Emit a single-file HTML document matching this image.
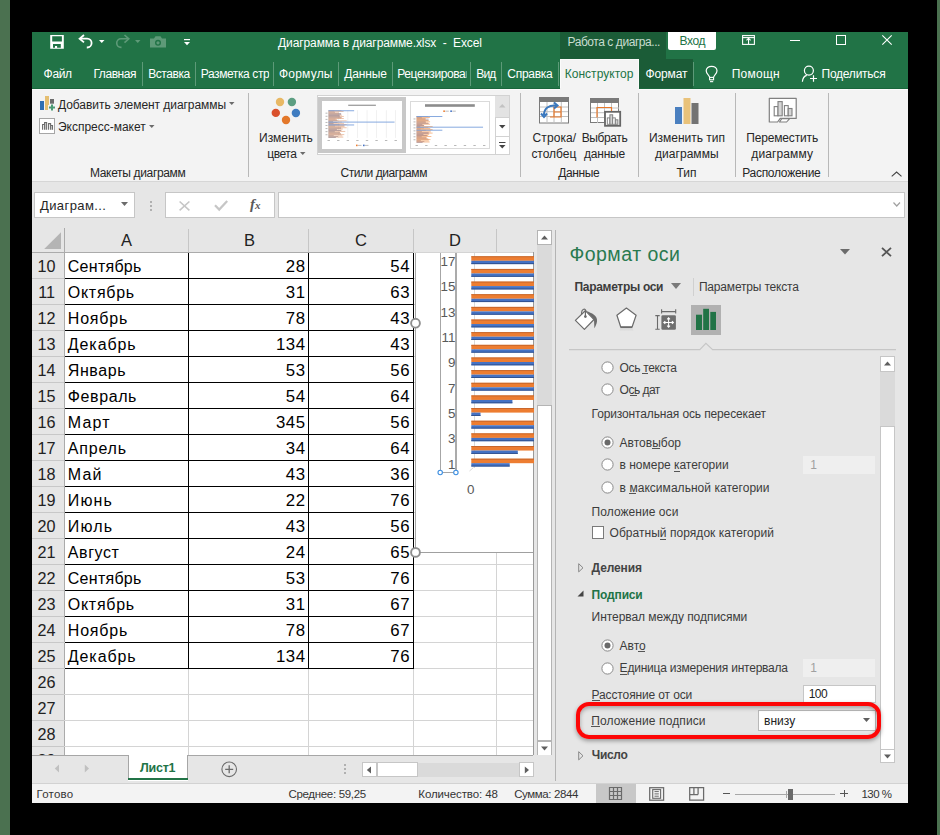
<!DOCTYPE html>
<html><head><meta charset="utf-8"><style>
html,body{margin:0;padding:0;}
body{width:940px;height:835px;background:#000;position:relative;overflow:hidden;font-family:'Liberation Sans', sans-serif;}
.a{position:absolute;display:block;}
.t{white-space:nowrap;}
svg.a{overflow:visible;}
</style></head><body>
<div class="a" style="left:0px;top:0px;width:10px;height:835px;background:#4b7150;"></div>
<div class="a" style="left:937px;top:0px;width:3px;height:835px;background:#4b7150;"></div>
<div class="a" style="left:32px;top:32px;width:876px;height:56px;background:#217346;"></div>
<div class="a" style="left:560px;top:32px;width:106px;height:27px;background:#1b5c37;"></div>
<span class="a t" id="t0" style="left:567.50px;top:35.84px;font-size:12px;line-height:12px;color:#c8dccf;font-weight:400;font-family:'Liberation Sans', sans-serif;letter-spacing:-0.438px;">Работа с диагра...</span>
<div class="a" style="left:668px;top:32px;width:48px;height:17.5px;background:#ffffff;border-radius:0 0 2px 2px;"></div>
<span class="a t" id="t1" style="left:679.50px;top:35.14px;font-size:12px;line-height:12px;color:#217346;font-weight:400;font-family:'Liberation Sans', sans-serif;letter-spacing:-0.414px;">Вход</span>
<span class="a t" id="t2" style="left:278.00px;top:36.84px;font-size:12px;line-height:12px;color:#ffffff;font-weight:400;font-family:'Liberation Sans', sans-serif;letter-spacing:-0.097px;">Диаграмма в диаграмме.xlsx&nbsp;&nbsp;-&nbsp;&nbsp;Excel</span>
<svg class="a" style="left:50px;top:35px;" width="14" height="14" viewBox="0 0 14 14"><path fill="#fff" fill-rule="evenodd" d="M0.2 0 H13.8 V13.7 H0.2 Z M2.2 1.2 H11.9 V6.6 H2.2 Z M3 9 H10.8 V12.7 H7.1 V11 H5 V12.7 H3 Z"/></svg>
<svg class="a" style="left:78px;top:34px;" width="16" height="15" viewBox="0 0 16 15"><path d="M2 4.7 H9.2 A4.4 4.4 0 0 1 9.2 13.5 H8.8" fill="none" stroke="#fff" stroke-width="1.8"/><path d="M6 1 L1.6 4.7 L6 8.4" fill="none" stroke="#fff" stroke-width="1.8"/></svg>
<svg class="a" style="left:98.5px;top:40px;" width="6" height="3.5" viewBox="0 0 6 3.5"><path d="M0 0 H5.5 L2.75 3 Z" fill="#fff"/></svg>
<svg class="a" style="left:113.5px;top:34px;" width="16" height="15" viewBox="0 0 16 15"><path d="M14.5 4.8 H7 A4.3 4.3 0 0 0 7 13.4 H7.5" fill="none" stroke="#5e9a78" stroke-width="1.6"/><path d="M10.5 1 L14.8 4.8 L10.5 8.6" fill="none" stroke="#5e9a78" stroke-width="1.6"/></svg>
<svg class="a" style="left:134.5px;top:40px;" width="6" height="3.5" viewBox="0 0 6 3.5"><path d="M0 0 H5.5 L2.75 3 Z" fill="#5e9a78"/></svg>
<svg class="a" style="left:150px;top:36px;" width="16" height="12" viewBox="0 0 16 12"><path d="M0 2.5 H4 L5.5 0.3 H10.5 L12 2.5 H16 V11.5 H0 Z" fill="#5e9a78"/><circle cx="8" cy="6.8" r="3" fill="#217346"/><circle cx="8" cy="6.8" r="1.6" fill="#5e9a78"/></svg>
<svg class="a" style="left:183.5px;top:38.5px;" width="6" height="7" viewBox="0 0 6 7"><rect x="0" y="0" width="6" height="1.2" fill="#fff"/><path d="M0 3 H6 L3 6.3 Z" fill="#fff"/></svg>
<svg class="a" style="left:742px;top:35px;" width="14" height="10" viewBox="0 0 14 10"><rect x="0.6" y="0.6" width="11.8" height="8.8" fill="none" stroke="#fff" stroke-width="1.1"/><path d="M0.6 2.6 H12.4" stroke="#fff" stroke-width="1.1"/><path d="M6.55 3 V9 M4.5 5.4 L6.55 3.2 L8.6 5.4" fill="none" stroke="#fff" stroke-width="1.1"/></svg>
<div class="a" style="left:790px;top:40px;width:10px;height:1px;background:#ffffff;"></div>
<svg class="a" style="left:836px;top:35px;" width="10" height="10" viewBox="0 0 10 10"><rect x="0.5" y="0.5" width="9" height="9" fill="none" stroke="#fff" stroke-width="1"/></svg>
<svg class="a" style="left:882px;top:35px;" width="10" height="10" viewBox="0 0 10 10"><path d="M0.3 0.3 L9.7 9.7 M9.7 0.3 L0.3 9.7" stroke="#fff" stroke-width="1.1"/></svg>
<span class="a t" id="t3" style="left:43.60px;top:67.84px;font-size:12px;line-height:12px;color:#fff;font-weight:400;font-family:'Liberation Sans', sans-serif;letter-spacing:-0.329px;">Файл</span>
<span class="a t" id="t4" style="left:93.50px;top:67.84px;font-size:12px;line-height:12px;color:#fff;font-weight:400;font-family:'Liberation Sans', sans-serif;letter-spacing:-0.455px;">Главная</span>
<span class="a t" id="t5" style="left:148.20px;top:67.84px;font-size:12px;line-height:12px;color:#fff;font-weight:400;font-family:'Liberation Sans', sans-serif;letter-spacing:-0.444px;">Вставка</span>
<span class="a t" id="t6" style="left:200.70px;top:67.84px;font-size:12px;line-height:12px;color:#fff;font-weight:400;font-family:'Liberation Sans', sans-serif;letter-spacing:-0.397px;clip-path:inset(-6px -0.01px -6px -6px);">Разметка стр</span>
<span class="a t" id="t7" style="left:279.00px;top:67.84px;font-size:12px;line-height:12px;color:#fff;font-weight:400;font-family:'Liberation Sans', sans-serif;letter-spacing:0.212px;">Формулы</span>
<span class="a t" id="t8" style="left:344.20px;top:67.84px;font-size:12px;line-height:12px;color:#fff;font-weight:400;font-family:'Liberation Sans', sans-serif;letter-spacing:-0.127px;">Данные</span>
<span class="a t" id="t9" style="left:397.30px;top:67.84px;font-size:12px;line-height:12px;color:#fff;font-weight:400;font-family:'Liberation Sans', sans-serif;letter-spacing:-0.430px;clip-path:inset(-6px 4.94px -6px -6px);">Рецензирован</span>
<span class="a t" id="t10" style="left:476.20px;top:67.84px;font-size:12px;line-height:12px;color:#fff;font-weight:400;font-family:'Liberation Sans', sans-serif;letter-spacing:-0.773px;">Вид</span>
<span class="a t" id="t11" style="left:507.30px;top:67.84px;font-size:12px;line-height:12px;color:#fff;font-weight:400;font-family:'Liberation Sans', sans-serif;letter-spacing:-0.268px;">Справка</span>
<div class="a" style="left:142px;top:62px;width:1px;height:24px;background:#5d9a78;"></div>
<div class="a" style="left:195px;top:62px;width:1px;height:24px;background:#5d9a78;"></div>
<div class="a" style="left:273px;top:62px;width:1px;height:24px;background:#5d9a78;"></div>
<div class="a" style="left:338px;top:62px;width:1px;height:24px;background:#5d9a78;"></div>
<div class="a" style="left:392px;top:62px;width:1px;height:24px;background:#5d9a78;"></div>
<div class="a" style="left:470px;top:62px;width:1px;height:24px;background:#5d9a78;"></div>
<div class="a" style="left:501px;top:62px;width:1px;height:24px;background:#5d9a78;"></div>
<div class="a" style="left:558px;top:62px;width:1px;height:24px;background:#5d9a78;"></div>
<div class="a" style="left:560px;top:59px;width:79px;height:30px;background:#f3f3f3;"></div>
<div class="a" style="left:560px;top:59px;width:79px;height:1px;background:#fbfbfb;"></div>
<div class="a" style="left:560px;top:59px;width:1px;height:30px;background:#fbfbfb;"></div>
<div class="a" style="left:638px;top:59px;width:1px;height:30px;background:#fbfbfb;"></div>
<span class="a t" id="t12" style="left:564.70px;top:67.84px;font-size:12px;line-height:12px;color:#217346;font-weight:400;font-family:'Liberation Sans', sans-serif;letter-spacing:0.034px;">Конструктор</span>
<div class="a" style="left:639px;top:59px;width:54px;height:29px;background:#1b5c37;"></div>
<span class="a t" id="t13" style="left:645.40px;top:67.84px;font-size:12px;line-height:12px;color:#fff;font-weight:400;font-family:'Liberation Sans', sans-serif;letter-spacing:-0.090px;">Формат</span>
<div class="a" style="left:693px;top:62px;width:1px;height:24px;background:#5d9a78;"></div>
<svg class="a" style="left:705px;top:65px;" width="14" height="19" viewBox="0 0 14 19"><path d="M4.6 12 L3.2 9.8 C1.9 8.5 1.2 7.1 1.2 5.8 C1.2 3.1 3.6 1.3 6.6 1.3 C9.6 1.3 12 3.1 12 5.8 C12 7.1 11.3 8.5 10 9.8 L8.6 12" fill="none" stroke="#fff" stroke-width="1.2"/><rect x="4.6" y="12.4" width="4" height="2.4" fill="none" stroke="#fff" stroke-width="1.1"/><rect x="5" y="16.1" width="3.2" height="1.1" fill="#fff"/></svg>
<span class="a t" id="t14" style="left:731.70px;top:67.84px;font-size:12px;line-height:12px;color:#fff;font-weight:400;font-family:'Liberation Sans', sans-serif;letter-spacing:0.261px;">Помощн</span>
<svg class="a" style="left:798px;top:62px;" width="22" height="22" viewBox="0 0 22 22"><circle cx="10.9" cy="8.6" r="4.5" fill="none" stroke="#fff" stroke-width="1.2"/><path d="M8.8 13.3 C6.3 13.9 4.6 16.6 4.4 19.8" fill="none" stroke="#fff" stroke-width="1.2"/><path d="M15.5 13.2 V19.8 M12 16.5 H19" stroke="#fff" stroke-width="1.2"/></svg>
<span class="a t" id="t15" style="left:821.50px;top:67.84px;font-size:12px;line-height:12px;color:#fff;font-weight:400;font-family:'Liberation Sans', sans-serif;letter-spacing:-0.237px;">Поделиться</span>
<div class="a" style="left:32px;top:88px;width:876px;height:94px;background:#f3f3f3;"></div>
<div class="a" style="left:32px;top:88px;width:528px;height:1px;background:#19663b;"></div>
<div class="a" style="left:639px;top:88px;width:269px;height:1px;background:#19663b;"></div>
<div class="a" style="left:32px;top:89px;width:528px;height:1px;background:#fbfbfb;"></div>
<div class="a" style="left:639px;top:89px;width:269px;height:1px;background:#fbfbfb;"></div>
<div class="a" style="left:32px;top:181px;width:876px;height:1px;background:#d6d6d6;"></div>
<div class="a" style="left:248px;top:93px;width:1px;height:84px;background:#b8b8b8;"></div>
<div class="a" style="left:520px;top:93px;width:1px;height:84px;background:#b8b8b8;"></div>
<div class="a" style="left:638px;top:93px;width:1px;height:84px;background:#b8b8b8;"></div>
<div class="a" style="left:735px;top:93px;width:1px;height:84px;background:#b8b8b8;"></div>
<div class="a" style="left:828px;top:93px;width:1px;height:84px;background:#b8b8b8;"></div>
<svg class="a" style="left:40px;top:96px;" width="16" height="16" viewBox="0 0 16 16"><rect x="0" y="5" width="4" height="9" fill="#2f6fb3"/><path d="M5 0 H9 V9 H8 V14 H5 Z" fill="#e5bf72"/><rect x="10" y="3" width="4" height="4.7" fill="#6b6b6b"/><path d="M12 8.5 V14.5 M9 11.5 H15" stroke="#4a9b74" stroke-width="2"/></svg>
<span class="a t" id="t16" style="left:58.00px;top:98.54px;font-size:12px;line-height:12px;color:#262626;font-weight:400;font-family:'Liberation Sans', sans-serif;letter-spacing:-0.058px;">Добавить элемент диаграммы</span>
<svg class="a" style="left:228.5px;top:102px;" width="6" height="3.5" viewBox="0 0 6 3.5"><path d="M0 0 H5.5 L2.75 3 Z" fill="#6b6b6b"/></svg>
<svg class="a" style="left:39px;top:118px;" width="16" height="16" viewBox="0 0 16 16"><rect x="0.5" y="0.5" width="15" height="15" fill="#fff" stroke="#a6a6a6"/><path d="M3.6 11.7 V6.5 H5.6 M5.6 11.7 V4.6 H7.6 V11.7 M9.6 11.7 V5.6 H11.6 V11.7 M11.6 7.5 H13.5 V11.7" fill="none" stroke="#6b6b6b" stroke-width="1.1" stroke-linejoin="miter"/><rect x="6.1" y="5.1" width="1" height="6.6" fill="#bdbdbd"/><rect x="12.1" y="8" width="0.9" height="3.7" fill="#bdbdbd"/></svg>
<span class="a t" id="t17" style="left:58.00px;top:121.34px;font-size:12px;line-height:12px;color:#262626;font-weight:400;font-family:'Liberation Sans', sans-serif;letter-spacing:-0.017px;">Экспресс-макет</span>
<svg class="a" style="left:148.5px;top:125px;" width="6" height="3.5" viewBox="0 0 6 3.5"><path d="M0 0 H5.5 L2.75 3 Z" fill="#6b6b6b"/></svg>
<span class="a t" id="t18" style="left:90.00px;top:167.34px;font-size:12px;line-height:12px;color:#262626;font-weight:400;font-family:'Liberation Sans', sans-serif;letter-spacing:-0.342px;">Макеты диаграмм</span>
<svg class="a" style="left:270px;top:96px;" width="32" height="30" viewBox="0 0 32 30"><circle cx="10" cy="6" r="4.2" fill="#e8b864"/><circle cx="21.9" cy="6" r="4.2" fill="#5c9e82"/><circle cx="5.8" cy="16.9" r="4.2" fill="#d9502c"/><circle cx="25.9" cy="17" r="4.2" fill="#3f7cc0"/><circle cx="16" cy="24" r="4.2" fill="#e3782a"/></svg>
<span class="a t" id="t19" style="left:259.10px;top:131.84px;font-size:12px;line-height:12px;color:#262626;font-weight:400;font-family:'Liberation Sans', sans-serif;letter-spacing:-0.055px;">Изменить</span>
<span class="a t" id="t20" style="left:267.30px;top:147.84px;font-size:12px;line-height:12px;color:#262626;font-weight:400;font-family:'Liberation Sans', sans-serif;letter-spacing:-0.467px;">цвета</span>
<svg class="a" style="left:300.3px;top:151.5px;" width="6" height="3.5" viewBox="0 0 6 3.5"><path d="M0 0 H5.5 L2.75 3 Z" fill="#6b6b6b"/></svg>
<div class="a" style="left:317px;top:95px;width:193px;height:60px;background:#ffffff;box-sizing:border-box;border:1px solid #d2d2d2;"></div>
<div class="a" style="left:318px;top:97px;width:88px;height:55.5px;background:#c8c8c8;"></div>
<div class="a" style="left:322px;top:101px;width:80px;height:48px;background:#ffffff;"></div>
<svg class="a" style="left:322px;top:101px;" width="80" height="48" viewBox="0 0 80 48"><rect x="6.50" y="9.20" width="0.5" height="27.70" fill="#e2e2e2"/><rect x="16.07" y="9.20" width="0.5" height="27.70" fill="#e2e2e2"/><rect x="25.64" y="9.20" width="0.5" height="27.70" fill="#e2e2e2"/><rect x="35.21" y="9.20" width="0.5" height="27.70" fill="#e2e2e2"/><rect x="44.79" y="9.20" width="0.5" height="27.70" fill="#e2e2e2"/><rect x="54.36" y="9.20" width="0.5" height="27.70" fill="#e2e2e2"/><rect x="63.93" y="9.20" width="0.5" height="27.70" fill="#e2e2e2"/><rect x="73.50" y="9.20" width="0.5" height="27.70" fill="#e2e2e2"/><rect x="6.50" y="9.20" width="12.92" height="0.63" fill="#e3a37c"/><rect x="6.50" y="9.78" width="5.90" height="0.58" fill="#8d7c88"/><rect x="6.50" y="10.35" width="15.07" height="0.63" fill="#e3a37c"/><rect x="6.50" y="10.93" width="6.53" height="0.58" fill="#8d7c88"/><rect x="6.50" y="11.51" width="10.29" height="0.63" fill="#e3a37c"/><rect x="6.50" y="12.09" width="12.63" height="0.58" fill="#8d7c88"/><rect x="6.50" y="12.66" width="10.29" height="0.63" fill="#e3a37c"/><rect x="6.50" y="13.24" width="12.63" height="0.58" fill="#8d7c88"/><rect x="6.50" y="13.82" width="13.40" height="0.63" fill="#e3a37c"/><rect x="6.50" y="14.39" width="11.16" height="0.58" fill="#8d7c88"/><rect x="6.50" y="14.97" width="15.31" height="0.63" fill="#e3a37c"/><rect x="6.50" y="15.55" width="11.37" height="0.58" fill="#8d7c88"/><rect x="6.50" y="16.12" width="13.40" height="0.63" fill="#e3a37c"/><rect x="6.50" y="16.70" width="12.63" height="0.58" fill="#8d7c88"/><rect x="6.50" y="17.28" width="15.31" height="0.63" fill="#e3a37c"/><rect x="6.50" y="17.86" width="7.16" height="0.58" fill="#8d7c88"/><rect x="6.50" y="18.43" width="8.61" height="0.63" fill="#e3a37c"/><rect x="6.50" y="19.01" width="9.05" height="0.58" fill="#8d7c88"/><rect x="6.50" y="19.59" width="18.19" height="0.63" fill="#e3a37c"/><rect x="6.50" y="20.16" width="4.63" height="0.58" fill="#8d7c88"/><rect x="6.50" y="20.74" width="13.40" height="0.63" fill="#e3a37c"/><rect x="6.50" y="21.32" width="9.05" height="0.58" fill="#8d7c88"/><rect x="6.50" y="21.90" width="15.55" height="0.63" fill="#e3a37c"/><rect x="6.50" y="22.47" width="5.05" height="0.58" fill="#8d7c88"/><rect x="6.50" y="23.05" width="18.19" height="0.63" fill="#e3a37c"/><rect x="6.50" y="23.63" width="11.16" height="0.58" fill="#8d7c88"/><rect x="6.50" y="24.20" width="16.03" height="0.63" fill="#e3a37c"/><rect x="6.50" y="24.78" width="6.53" height="0.58" fill="#8d7c88"/><rect x="6.50" y="25.36" width="16.03" height="0.63" fill="#e3a37c"/><rect x="6.50" y="25.94" width="12.63" height="0.58" fill="#8d7c88"/><rect x="6.50" y="26.51" width="18.19" height="0.63" fill="#e3a37c"/><rect x="6.50" y="27.09" width="12.63" height="0.58" fill="#8d7c88"/><rect x="6.50" y="27.67" width="14.36" height="0.63" fill="#e3a37c"/><rect x="6.50" y="28.24" width="8.42" height="0.58" fill="#8d7c88"/><rect x="6.50" y="28.82" width="13.16" height="0.63" fill="#e3a37c"/><rect x="6.50" y="29.40" width="12.63" height="0.58" fill="#8d7c88"/><rect x="6.50" y="29.97" width="16.75" height="0.63" fill="#e3a37c"/><rect x="6.50" y="30.55" width="6.32" height="0.58" fill="#8d7c88"/><rect x="6.50" y="31.13" width="11.49" height="0.63" fill="#e3a37c"/><rect x="6.50" y="31.71" width="11.58" height="0.58" fill="#8d7c88"/><rect x="6.50" y="32.28" width="12.44" height="0.63" fill="#e3a37c"/><rect x="6.50" y="32.86" width="12.63" height="0.58" fill="#8d7c88"/><rect x="6.50" y="33.44" width="15.79" height="0.63" fill="#e3a37c"/><rect x="6.50" y="34.01" width="5.26" height="0.58" fill="#8d7c88"/><rect x="6.50" y="34.59" width="13.88" height="0.63" fill="#e3a37c"/><rect x="6.50" y="35.17" width="9.48" height="0.58" fill="#8d7c88"/><rect x="6.50" y="35.75" width="14.84" height="0.63" fill="#e3a37c"/><rect x="6.50" y="36.32" width="7.37" height="0.58" fill="#8d7c88"/><rect x="6.50" y="9.32" width="25.65" height="0.9" fill="#7aa0dc"/><rect x="6.50" y="20.63" width="66.04" height="0.9" fill="#7aa0dc"/><rect x="6.50" y="23.51" width="25.65" height="0.9" fill="#7aa0dc"/><rect x="26.20" y="3.70" width="27.70" height="1.1" fill="#8c8c8c"/><rect x="3.50" y="11.70" width="2" height="0.9" fill="#b0b0b0"/><rect x="3.50" y="14.79" width="2" height="0.9" fill="#b0b0b0"/><rect x="3.50" y="17.88" width="2" height="0.9" fill="#b0b0b0"/><rect x="3.50" y="20.96" width="2" height="0.9" fill="#b0b0b0"/><rect x="3.50" y="24.05" width="2" height="0.9" fill="#b0b0b0"/><rect x="3.50" y="27.14" width="2" height="0.9" fill="#b0b0b0"/><rect x="3.50" y="30.22" width="2" height="0.9" fill="#b0b0b0"/><rect x="3.50" y="33.31" width="2" height="0.9" fill="#b0b0b0"/><rect x="5.50" y="39.00" width="2.4" height="0.9" fill="#b0b0b0"/><rect x="15.07" y="39.00" width="2.4" height="0.9" fill="#b0b0b0"/><rect x="24.64" y="39.00" width="2.4" height="0.9" fill="#b0b0b0"/><rect x="34.21" y="39.00" width="2.4" height="0.9" fill="#b0b0b0"/><rect x="43.79" y="39.00" width="2.4" height="0.9" fill="#b0b0b0"/><rect x="53.36" y="39.00" width="2.4" height="0.9" fill="#b0b0b0"/><rect x="62.93" y="39.00" width="2.4" height="0.9" fill="#b0b0b0"/><rect x="72.50" y="39.00" width="2.4" height="0.9" fill="#b0b0b0"/><rect x="34.00" y="43.60" width="1.6" height="1.6" fill="#ed7d31"/><rect x="36.00" y="43.90" width="3.5" height="0.9" fill="#b8b8b8"/><rect x="41.00" y="43.60" width="1.6" height="1.6" fill="#4472c4"/><rect x="43.00" y="43.90" width="3.5" height="0.9" fill="#b8b8b8"/></svg>
<div class="a" style="left:410px;top:101px;width:80px;height:48px;background:#ffffff;box-sizing:border-box;border:1px solid #dadada;"></div>
<svg class="a" style="left:410px;top:101px;" width="80" height="48" viewBox="0 0 80 48"><rect x="6.50" y="15.00" width="11.46" height="0.61" fill="#f0944f"/><rect x="6.50" y="15.56" width="4.86" height="0.50" fill="#8a6e7e"/><rect x="6.50" y="16.12" width="13.37" height="0.61" fill="#f0944f"/><rect x="6.50" y="16.68" width="5.38" height="0.50" fill="#8a6e7e"/><rect x="6.50" y="17.23" width="9.12" height="0.61" fill="#f0944f"/><rect x="6.50" y="17.79" width="12.15" height="0.50" fill="#8a6e7e"/><rect x="6.50" y="18.35" width="9.12" height="0.61" fill="#f0944f"/><rect x="6.50" y="18.91" width="12.15" height="0.50" fill="#8a6e7e"/><rect x="6.50" y="19.47" width="11.88" height="0.61" fill="#f0944f"/><rect x="6.50" y="20.03" width="9.20" height="0.50" fill="#8a6e7e"/><rect x="6.50" y="20.58" width="13.58" height="0.61" fill="#f0944f"/><rect x="6.50" y="21.14" width="9.37" height="0.50" fill="#8a6e7e"/><rect x="6.50" y="21.70" width="11.88" height="0.61" fill="#f0944f"/><rect x="6.50" y="22.26" width="12.15" height="0.50" fill="#8a6e7e"/><rect x="6.50" y="22.82" width="13.58" height="0.61" fill="#f0944f"/><rect x="6.50" y="23.37" width="5.90" height="0.50" fill="#8a6e7e"/><rect x="6.50" y="23.93" width="7.64" height="0.61" fill="#f0944f"/><rect x="6.50" y="24.49" width="7.46" height="0.50" fill="#8a6e7e"/><rect x="6.50" y="25.05" width="16.12" height="0.61" fill="#f0944f"/><rect x="6.50" y="25.61" width="3.82" height="0.50" fill="#8a6e7e"/><rect x="6.50" y="26.17" width="11.88" height="0.61" fill="#f0944f"/><rect x="6.50" y="26.73" width="7.46" height="0.50" fill="#8a6e7e"/><rect x="6.50" y="27.28" width="13.79" height="0.61" fill="#f0944f"/><rect x="6.50" y="27.84" width="4.17" height="0.50" fill="#8a6e7e"/><rect x="6.50" y="28.40" width="16.12" height="0.61" fill="#f0944f"/><rect x="6.50" y="28.96" width="9.20" height="0.50" fill="#8a6e7e"/><rect x="6.50" y="29.52" width="14.21" height="0.61" fill="#f0944f"/><rect x="6.50" y="30.08" width="5.38" height="0.50" fill="#8a6e7e"/><rect x="6.50" y="30.63" width="14.21" height="0.61" fill="#f0944f"/><rect x="6.50" y="31.19" width="12.15" height="0.50" fill="#8a6e7e"/><rect x="6.50" y="31.75" width="16.12" height="0.61" fill="#f0944f"/><rect x="6.50" y="32.31" width="12.15" height="0.50" fill="#8a6e7e"/><rect x="6.50" y="32.87" width="12.73" height="0.61" fill="#f0944f"/><rect x="6.50" y="33.43" width="6.94" height="0.50" fill="#8a6e7e"/><rect x="6.50" y="33.98" width="11.67" height="0.61" fill="#f0944f"/><rect x="6.50" y="34.54" width="10.41" height="0.50" fill="#8a6e7e"/><rect x="6.50" y="35.10" width="14.85" height="0.61" fill="#f0944f"/><rect x="6.50" y="35.66" width="5.21" height="0.50" fill="#8a6e7e"/><rect x="6.50" y="36.22" width="10.18" height="0.61" fill="#f0944f"/><rect x="6.50" y="36.78" width="9.55" height="0.50" fill="#8a6e7e"/><rect x="6.50" y="37.33" width="11.03" height="0.61" fill="#f0944f"/><rect x="6.50" y="37.89" width="12.15" height="0.50" fill="#8a6e7e"/><rect x="6.50" y="38.45" width="14.00" height="0.61" fill="#f0944f"/><rect x="6.50" y="39.01" width="4.34" height="0.50" fill="#8a6e7e"/><rect x="6.50" y="39.57" width="12.30" height="0.61" fill="#f0944f"/><rect x="6.50" y="40.12" width="7.81" height="0.50" fill="#8a6e7e"/><rect x="6.50" y="40.68" width="13.15" height="0.61" fill="#f0944f"/><rect x="6.50" y="41.24" width="6.08" height="0.50" fill="#8a6e7e"/><rect x="6.50" y="15.11" width="25.84" height="0.9" fill="#7aa0dc"/><rect x="6.50" y="25.72" width="66.54" height="0.9" fill="#7aa0dc"/><rect x="6.50" y="28.74" width="25.84" height="0.9" fill="#7aa0dc"/><rect x="15.00" y="3.20" width="49.80" height="2.6" fill="#8c8c8c"/><rect x="3.50" y="17.50" width="2" height="0.9" fill="#b0b0b0"/><rect x="3.50" y="20.47" width="2" height="0.9" fill="#b0b0b0"/><rect x="3.50" y="23.45" width="2" height="0.9" fill="#b0b0b0"/><rect x="3.50" y="26.43" width="2" height="0.9" fill="#b0b0b0"/><rect x="3.50" y="29.40" width="2" height="0.9" fill="#b0b0b0"/><rect x="3.50" y="32.38" width="2" height="0.9" fill="#b0b0b0"/><rect x="3.50" y="35.35" width="2" height="0.9" fill="#b0b0b0"/><rect x="3.50" y="38.33" width="2" height="0.9" fill="#b0b0b0"/><rect x="5.50" y="44.00" width="2.4" height="0.9" fill="#b0b0b0"/><rect x="15.14" y="44.00" width="2.4" height="0.9" fill="#b0b0b0"/><rect x="24.79" y="44.00" width="2.4" height="0.9" fill="#b0b0b0"/><rect x="34.43" y="44.00" width="2.4" height="0.9" fill="#b0b0b0"/><rect x="44.07" y="44.00" width="2.4" height="0.9" fill="#b0b0b0"/><rect x="53.71" y="44.00" width="2.4" height="0.9" fill="#b0b0b0"/><rect x="63.36" y="44.00" width="2.4" height="0.9" fill="#b0b0b0"/><rect x="73.00" y="44.00" width="2.4" height="0.9" fill="#b0b0b0"/><rect x="33.30" y="9.40" width="1.6" height="1.6" fill="#ed7d31"/><rect x="35.30" y="9.70" width="3.5" height="0.9" fill="#b8b8b8"/><rect x="40.30" y="9.40" width="1.6" height="1.6" fill="#4472c4"/><rect x="42.30" y="9.70" width="3.5" height="0.9" fill="#b8b8b8"/></svg>
<div class="a" style="left:495.3px;top:95px;width:1.0px;height:60px;background:#d2d2d2;"></div>
<div class="a" style="left:495.3px;top:95.5px;width:14.199999999999989px;height:21.0px;background:#e3e3e3;"></div>
<div class="a" style="left:495.3px;top:116.5px;width:14.699999999999989px;height:1.0px;background:#d2d2d2;"></div>
<div class="a" style="left:495.3px;top:135.5px;width:14.699999999999989px;height:1.0px;background:#d2d2d2;"></div>
<svg class="a" style="left:499px;top:103.5px;" width="7" height="4" viewBox="0 0 7 4"><path d="M0 3.5 H6.5 L3.25 0 Z" fill="#c2c2c2"/></svg>
<svg class="a" style="left:499px;top:124.5px;" width="7" height="4" viewBox="0 0 7 4"><path d="M0 0 H6.5 L3.25 3.5 Z" fill="#444"/></svg>
<svg class="a" style="left:499px;top:141.5px;" width="7" height="7" viewBox="0 0 7 7"><rect x="0" y="0" width="6.5" height="1" fill="#444"/><path d="M0 3 H6.5 L3.25 6.5 Z" fill="#444"/></svg>
<span class="a t" id="t21" style="left:340.40px;top:166.84px;font-size:12px;line-height:12px;color:#262626;font-weight:400;font-family:'Liberation Sans', sans-serif;letter-spacing:-0.423px;">Стили диаграмм</span>
<svg class="a" style="left:538.5px;top:96.5px;" width="31" height="27" viewBox="0 0 31 27"><rect x="0.5" y="0.5" width="29" height="25.5" fill="#fff" stroke="#7a7a7a"/><rect x="0.5" y="0.5" width="29" height="4.5" fill="#7a7a7a"/><path d="M1 10 H29 M1 14.7 H29 M1 19.5 H29 M8 5 V26 M15 5 V26 M22.3 5 V26" stroke="#c0c0c0" stroke-width="1"/><path d="M11 20 H22 V10 H15 V20 M15 15 H22" fill="none" stroke="#e8792b" stroke-width="1.2"/><path d="M5 18 C5 11 10 8 17 8.5" fill="none" stroke="#3a78be" stroke-width="2"/><path d="M15 5.5 L18.5 8.5 L15 11.5" fill="none" stroke="#3a78be" stroke-width="2"/><path d="M2 16.5 L5 20 L8 16.5" fill="none" stroke="#3a78be" stroke-width="2"/></svg>
<span class="a t" id="t22" style="left:532.60px;top:132.14px;font-size:12px;line-height:12px;color:#262626;font-weight:400;font-family:'Liberation Sans', sans-serif;letter-spacing:0.096px;">Строка/</span>
<span class="a t" id="t23" style="left:531.40px;top:148.04px;font-size:12px;line-height:12px;color:#262626;font-weight:400;font-family:'Liberation Sans', sans-serif;letter-spacing:-0.023px;">столбец</span>
<svg class="a" style="left:590px;top:98px;" width="32" height="29" viewBox="0 0 32 29"><rect x="0.5" y="0.5" width="28" height="24" fill="#fff" stroke="#7a7a7a"/><rect x="0.5" y="0.5" width="28" height="4.5" fill="#7a7a7a"/><path d="M1 10 H29 M1 14.7 H29 M1 19.5 H29 M7.5 5 V25 M14.5 5 V25 M21.5 5 V25" stroke="#c0c0c0" stroke-width="1"/><path d="M7 19.5 V9.5 H21.5 V13" fill="none" stroke="#e8792b" stroke-width="1.2"/><rect x="15" y="13.8" width="15.2" height="14" fill="#fff" stroke="#666" stroke-width="1.8"/><rect x="17.3" y="19.9" width="2.6" height="6.4" fill="#fff" stroke="#7a7a7a" stroke-width="0.9"/><rect x="19.9" y="16.8" width="2.8" height="9.5" fill="#d2d2d2" stroke="#7a7a7a" stroke-width="0.9"/><rect x="22.7" y="19.9" width="2.6" height="6.4" fill="#fff" stroke="#7a7a7a" stroke-width="0.9"/><rect x="25.3" y="21.8" width="2.6" height="4.5" fill="#d2d2d2" stroke="#7a7a7a" stroke-width="0.9"/></svg>
<span class="a t" id="t24" style="left:581.70px;top:132.14px;font-size:12px;line-height:12px;color:#262626;font-weight:400;font-family:'Liberation Sans', sans-serif;letter-spacing:-0.392px;">Выбрать</span>
<span class="a t" id="t25" style="left:584.00px;top:148.04px;font-size:12px;line-height:12px;color:#262626;font-weight:400;font-family:'Liberation Sans', sans-serif;letter-spacing:-0.206px;">данные</span>
<span class="a t" id="t26" style="left:558.30px;top:166.84px;font-size:12px;line-height:12px;color:#262626;font-weight:400;font-family:'Liberation Sans', sans-serif;letter-spacing:-0.410px;">Данные</span>
<svg class="a" style="left:674.5px;top:97.5px;" width="24" height="27" viewBox="0 0 24 27"><rect x="0" y="9" width="7" height="17" fill="#4a7fbf"/><rect x="8.5" y="0" width="7" height="26" fill="#e9c27a"/><rect x="16.5" y="5" width="7" height="21" fill="#737373"/></svg>
<span class="a t" id="t27" style="left:649.00px;top:131.84px;font-size:12px;line-height:12px;color:#262626;font-weight:400;font-family:'Liberation Sans', sans-serif;letter-spacing:-0.014px;">Изменить тип</span>
<span class="a t" id="t28" style="left:655.00px;top:147.84px;font-size:12px;line-height:12px;color:#262626;font-weight:400;font-family:'Liberation Sans', sans-serif;letter-spacing:0.041px;">диаграммы</span>
<span class="a t" id="t29" style="left:676.50px;top:166.84px;font-size:12px;line-height:12px;color:#262626;font-weight:400;font-family:'Liberation Sans', sans-serif;letter-spacing:-0.039px;">Тип</span>
<svg class="a" style="left:767.5px;top:97px;" width="30" height="27" viewBox="0 0 30 27"><path d="M1.3 1.3 H28.2 V21.4 H12.2 L9.6 25 H1.3 Z" fill="#fff" stroke="#808080" stroke-width="1.2" stroke-linejoin="round"/><path d="M11.5 25 L13.8 21.6 H21.7 L18.6 25 Z" fill="#fff" stroke="#808080" stroke-width="1.1" stroke-linejoin="round"/><rect x="6.2" y="9.6" width="3.8" height="9.2" fill="#fff" stroke="#808080" stroke-width="1.1"/><rect x="10" y="4.6" width="4.2" height="14.2" fill="#d6d6d6" stroke="#808080" stroke-width="1.1"/><rect x="16.4" y="8.6" width="3.8" height="10.2" fill="#fff" stroke="#808080" stroke-width="1.1"/><rect x="20.2" y="11.5" width="3.8" height="7.3" fill="#d6d6d6" stroke="#808080" stroke-width="1.1"/></svg>
<span class="a t" id="t30" style="left:746.30px;top:132.44px;font-size:12px;line-height:12px;color:#262626;font-weight:400;font-family:'Liberation Sans', sans-serif;letter-spacing:-0.166px;">Переместить</span>
<span class="a t" id="t31" style="left:751.30px;top:147.84px;font-size:12px;line-height:12px;color:#262626;font-weight:400;font-family:'Liberation Sans', sans-serif;letter-spacing:0.106px;">диаграмму</span>
<span class="a t" id="t32" style="left:742.20px;top:166.84px;font-size:12px;line-height:12px;color:#262626;font-weight:400;font-family:'Liberation Sans', sans-serif;letter-spacing:-0.273px;">Расположение</span>
<svg class="a" style="left:891px;top:171px;" width="11" height="7" viewBox="0 0 11 7"><path d="M0.7 5.4 L5.6 1 L10.5 5.4" fill="none" stroke="#444" stroke-width="1.1"/></svg>
<div class="a" style="left:32px;top:182px;width:876px;height:621px;background:#e6e6e6;"></div>
<div class="a" style="left:33.5px;top:192px;width:101.5px;height:26px;background:#fff;box-sizing:border-box;border:1px solid #c6c6c6;"></div>
<span class="a t" id="t33" style="left:40.00px;top:198.80px;font-size:13px;line-height:13px;color:#262626;font-weight:400;font-family:'Liberation Sans', sans-serif;letter-spacing:0.402px;">Диаграм...</span>
<svg class="a" style="left:121px;top:202px;" width="7.5" height="4.5" viewBox="0 0 7.5 4.5"><path d="M0 0 H7 L3.5 4 Z" fill="#6b6b6b"/></svg>
<div class="a" style="left:149.5px;top:200.5px;width:2.0px;height:2.0px;background:#b0b0b0;"></div>
<div class="a" style="left:149.5px;top:204.5px;width:2.0px;height:2.0px;background:#b0b0b0;"></div>
<div class="a" style="left:149.5px;top:208.5px;width:2.0px;height:2.0px;background:#b0b0b0;"></div>
<div class="a" style="left:165px;top:192px;width:110px;height:26px;background:#fff;box-sizing:border-box;border:1px solid #c6c6c6;"></div>
<svg class="a" style="left:178.5px;top:200.5px;" width="11" height="10" viewBox="0 0 11 10"><path d="M0.6 0.5 L10.4 9.4 M10.4 0.5 L0.6 9.4" stroke="#c6c6c6" stroke-width="1.6"/></svg>
<svg class="a" style="left:213.5px;top:200px;" width="14" height="11" viewBox="0 0 14 11"><path d="M1 5.3 L5.2 9.6 L13.2 1" fill="none" stroke="#c6c6c6" stroke-width="2.2"/></svg>
<span class="a t" id="t34" style="left:250.00px;top:196.80px;font-size:15px;line-height:15px;color:#595959;font-weight:700;font-family:'Liberation Serif', serif;font-style:italic;">f<span style="font-size:11px">x</span></span>
<div class="a" style="left:278px;top:192px;width:627px;height:26px;background:#fff;box-sizing:border-box;border:1px solid #c6c6c6;"></div>
<svg class="a" style="left:893px;top:202px;" width="8" height="5" viewBox="0 0 8 5"><path d="M0.5 0.5 L3.75 4 L7 0.5" fill="none" stroke="#a0a0a0" stroke-width="1.2"/></svg>
<div class="a" style="left:64px;top:252px;width:470px;height:504px;background:#fff;"></div>
<div class="a" style="left:32px;top:252px;width:502px;height:1px;background:#ababab;"></div>
<div class="a" style="left:64px;top:228px;width:1px;height:528px;background:#ababab;"></div>
<svg class="a" style="left:44px;top:231.7px;" width="18" height="18" viewBox="0 0 18 18"><path d="M17 0.2 V17 H0.2 Z" fill="#b4b4b4"/></svg>
<div class="a" style="left:188px;top:229px;width:1px;height:23px;background:#c6c6c6;"></div>
<div class="a" style="left:308px;top:229px;width:1px;height:23px;background:#c6c6c6;"></div>
<div class="a" style="left:413px;top:229px;width:1px;height:23px;background:#c6c6c6;"></div>
<div class="a" style="left:496px;top:229px;width:1px;height:23px;background:#c6c6c6;"></div>
<span class="a t" id="t35" style="left:120.89px;top:232.43px;font-size:16.5px;line-height:16.5px;color:#222;font-weight:400;font-family:'Liberation Sans', sans-serif;">A</span>
<span class="a t" id="t36" style="left:243.89px;top:232.43px;font-size:16.5px;line-height:16.5px;color:#222;font-weight:400;font-family:'Liberation Sans', sans-serif;">B</span>
<span class="a t" id="t37" style="left:355.04px;top:232.43px;font-size:16.5px;line-height:16.5px;color:#222;font-weight:400;font-family:'Liberation Sans', sans-serif;">C</span>
<span class="a t" id="t38" style="left:449.04px;top:232.43px;font-size:16.5px;line-height:16.5px;color:#222;font-weight:400;font-family:'Liberation Sans', sans-serif;">D</span>
<div class="a" style="left:32px;top:278px;width:32px;height:1px;background:#c8c8c8;"></div>
<span class="a t" id="t39" style="left:37.59px;top:257.89px;font-size:16.2px;line-height:16.2px;color:#222;font-weight:400;font-family:'Liberation Sans', sans-serif;">10</span>
<div class="a" style="left:32px;top:304px;width:32px;height:1px;background:#c8c8c8;"></div>
<span class="a t" id="t40" style="left:38.19px;top:283.89px;font-size:16.2px;line-height:16.2px;color:#222;font-weight:400;font-family:'Liberation Sans', sans-serif;">11</span>
<div class="a" style="left:32px;top:330px;width:32px;height:1px;background:#c8c8c8;"></div>
<span class="a t" id="t41" style="left:37.59px;top:309.89px;font-size:16.2px;line-height:16.2px;color:#222;font-weight:400;font-family:'Liberation Sans', sans-serif;">12</span>
<div class="a" style="left:32px;top:356px;width:32px;height:1px;background:#c8c8c8;"></div>
<span class="a t" id="t42" style="left:37.59px;top:335.89px;font-size:16.2px;line-height:16.2px;color:#222;font-weight:400;font-family:'Liberation Sans', sans-serif;">13</span>
<div class="a" style="left:32px;top:382px;width:32px;height:1px;background:#c8c8c8;"></div>
<span class="a t" id="t43" style="left:37.59px;top:361.89px;font-size:16.2px;line-height:16.2px;color:#222;font-weight:400;font-family:'Liberation Sans', sans-serif;">14</span>
<div class="a" style="left:32px;top:408px;width:32px;height:1px;background:#c8c8c8;"></div>
<span class="a t" id="t44" style="left:37.59px;top:387.89px;font-size:16.2px;line-height:16.2px;color:#222;font-weight:400;font-family:'Liberation Sans', sans-serif;">15</span>
<div class="a" style="left:32px;top:434px;width:32px;height:1px;background:#c8c8c8;"></div>
<span class="a t" id="t45" style="left:37.59px;top:413.89px;font-size:16.2px;line-height:16.2px;color:#222;font-weight:400;font-family:'Liberation Sans', sans-serif;">16</span>
<div class="a" style="left:32px;top:460px;width:32px;height:1px;background:#c8c8c8;"></div>
<span class="a t" id="t46" style="left:37.59px;top:439.89px;font-size:16.2px;line-height:16.2px;color:#222;font-weight:400;font-family:'Liberation Sans', sans-serif;">17</span>
<div class="a" style="left:32px;top:486px;width:32px;height:1px;background:#c8c8c8;"></div>
<span class="a t" id="t47" style="left:37.59px;top:465.89px;font-size:16.2px;line-height:16.2px;color:#222;font-weight:400;font-family:'Liberation Sans', sans-serif;">18</span>
<div class="a" style="left:32px;top:512px;width:32px;height:1px;background:#c8c8c8;"></div>
<span class="a t" id="t48" style="left:37.59px;top:491.89px;font-size:16.2px;line-height:16.2px;color:#222;font-weight:400;font-family:'Liberation Sans', sans-serif;">19</span>
<div class="a" style="left:32px;top:538px;width:32px;height:1px;background:#c8c8c8;"></div>
<span class="a t" id="t49" style="left:37.59px;top:517.89px;font-size:16.2px;line-height:16.2px;color:#222;font-weight:400;font-family:'Liberation Sans', sans-serif;">20</span>
<div class="a" style="left:32px;top:564px;width:32px;height:1px;background:#c8c8c8;"></div>
<span class="a t" id="t50" style="left:37.59px;top:543.89px;font-size:16.2px;line-height:16.2px;color:#222;font-weight:400;font-family:'Liberation Sans', sans-serif;">21</span>
<div class="a" style="left:32px;top:590px;width:32px;height:1px;background:#c8c8c8;"></div>
<span class="a t" id="t51" style="left:37.59px;top:569.89px;font-size:16.2px;line-height:16.2px;color:#222;font-weight:400;font-family:'Liberation Sans', sans-serif;">22</span>
<div class="a" style="left:32px;top:616px;width:32px;height:1px;background:#c8c8c8;"></div>
<span class="a t" id="t52" style="left:37.59px;top:595.89px;font-size:16.2px;line-height:16.2px;color:#222;font-weight:400;font-family:'Liberation Sans', sans-serif;">23</span>
<div class="a" style="left:32px;top:642px;width:32px;height:1px;background:#c8c8c8;"></div>
<span class="a t" id="t53" style="left:37.59px;top:621.89px;font-size:16.2px;line-height:16.2px;color:#222;font-weight:400;font-family:'Liberation Sans', sans-serif;">24</span>
<div class="a" style="left:32px;top:668px;width:32px;height:1px;background:#c8c8c8;"></div>
<span class="a t" id="t54" style="left:37.59px;top:647.89px;font-size:16.2px;line-height:16.2px;color:#222;font-weight:400;font-family:'Liberation Sans', sans-serif;">25</span>
<div class="a" style="left:32px;top:694px;width:32px;height:1px;background:#c8c8c8;"></div>
<span class="a t" id="t55" style="left:37.59px;top:673.89px;font-size:16.2px;line-height:16.2px;color:#222;font-weight:400;font-family:'Liberation Sans', sans-serif;">26</span>
<div class="a" style="left:32px;top:720px;width:32px;height:1px;background:#c8c8c8;"></div>
<span class="a t" id="t56" style="left:37.59px;top:699.89px;font-size:16.2px;line-height:16.2px;color:#222;font-weight:400;font-family:'Liberation Sans', sans-serif;">27</span>
<div class="a" style="left:32px;top:746px;width:32px;height:1px;background:#c8c8c8;"></div>
<span class="a t" id="t57" style="left:37.59px;top:725.89px;font-size:16.2px;line-height:16.2px;color:#222;font-weight:400;font-family:'Liberation Sans', sans-serif;">28</span>
<span class="a t" id="t58" style="left:37.59px;top:751.89px;font-size:16.2px;line-height:16.2px;color:#222;font-weight:400;font-family:'Liberation Sans', sans-serif;">29</span>
<div class="a" style="left:64px;top:642px;width:470px;height:1px;background:#d4d4d4;"></div>
<div class="a" style="left:64px;top:668px;width:470px;height:1px;background:#d4d4d4;"></div>
<div class="a" style="left:64px;top:694px;width:470px;height:1px;background:#d4d4d4;"></div>
<div class="a" style="left:64px;top:720px;width:470px;height:1px;background:#d4d4d4;"></div>
<div class="a" style="left:64px;top:746px;width:470px;height:1px;background:#d4d4d4;"></div>
<div class="a" style="left:413px;top:252px;width:121px;height:1px;background:#d4d4d4;"></div>
<div class="a" style="left:413px;top:278px;width:121px;height:1px;background:#d4d4d4;"></div>
<div class="a" style="left:413px;top:304px;width:121px;height:1px;background:#d4d4d4;"></div>
<div class="a" style="left:413px;top:330px;width:121px;height:1px;background:#d4d4d4;"></div>
<div class="a" style="left:413px;top:356px;width:121px;height:1px;background:#d4d4d4;"></div>
<div class="a" style="left:413px;top:382px;width:121px;height:1px;background:#d4d4d4;"></div>
<div class="a" style="left:413px;top:408px;width:121px;height:1px;background:#d4d4d4;"></div>
<div class="a" style="left:413px;top:434px;width:121px;height:1px;background:#d4d4d4;"></div>
<div class="a" style="left:413px;top:460px;width:121px;height:1px;background:#d4d4d4;"></div>
<div class="a" style="left:413px;top:486px;width:121px;height:1px;background:#d4d4d4;"></div>
<div class="a" style="left:413px;top:512px;width:121px;height:1px;background:#d4d4d4;"></div>
<div class="a" style="left:413px;top:538px;width:121px;height:1px;background:#d4d4d4;"></div>
<div class="a" style="left:413px;top:564px;width:121px;height:1px;background:#d4d4d4;"></div>
<div class="a" style="left:413px;top:590px;width:121px;height:1px;background:#d4d4d4;"></div>
<div class="a" style="left:413px;top:616px;width:121px;height:1px;background:#d4d4d4;"></div>
<div class="a" style="left:413px;top:642px;width:121px;height:1px;background:#d4d4d4;"></div>
<div class="a" style="left:413px;top:668px;width:121px;height:1px;background:#d4d4d4;"></div>
<div class="a" style="left:413px;top:694px;width:121px;height:1px;background:#d4d4d4;"></div>
<div class="a" style="left:413px;top:720px;width:121px;height:1px;background:#d4d4d4;"></div>
<div class="a" style="left:413px;top:746px;width:121px;height:1px;background:#d4d4d4;"></div>
<div class="a" style="left:188px;top:668px;width:1px;height:88px;background:#d4d4d4;"></div>
<div class="a" style="left:308px;top:668px;width:1px;height:88px;background:#d4d4d4;"></div>
<div class="a" style="left:413px;top:668px;width:1px;height:88px;background:#d4d4d4;"></div>
<div class="a" style="left:496px;top:668px;width:1px;height:88px;background:#d4d4d4;"></div>
<div class="a" style="left:496px;top:252px;width:1px;height:504px;background:#d4d4d4;"></div>
<div class="a" style="left:65px;top:278px;width:349px;height:1px;background:#000;"></div>
<div class="a" style="left:65px;top:304px;width:349px;height:1px;background:#000;"></div>
<div class="a" style="left:65px;top:330px;width:349px;height:1px;background:#000;"></div>
<div class="a" style="left:65px;top:356px;width:349px;height:1px;background:#000;"></div>
<div class="a" style="left:65px;top:382px;width:349px;height:1px;background:#000;"></div>
<div class="a" style="left:65px;top:408px;width:349px;height:1px;background:#000;"></div>
<div class="a" style="left:65px;top:434px;width:349px;height:1px;background:#000;"></div>
<div class="a" style="left:65px;top:460px;width:349px;height:1px;background:#000;"></div>
<div class="a" style="left:65px;top:486px;width:349px;height:1px;background:#000;"></div>
<div class="a" style="left:65px;top:512px;width:349px;height:1px;background:#000;"></div>
<div class="a" style="left:65px;top:538px;width:349px;height:1px;background:#000;"></div>
<div class="a" style="left:65px;top:564px;width:349px;height:1px;background:#000;"></div>
<div class="a" style="left:65px;top:590px;width:349px;height:1px;background:#000;"></div>
<div class="a" style="left:65px;top:616px;width:349px;height:1px;background:#000;"></div>
<div class="a" style="left:65px;top:642px;width:349px;height:1px;background:#000;"></div>
<div class="a" style="left:65px;top:668px;width:349px;height:1px;background:#000;"></div>
<div class="a" style="left:188px;top:253px;width:1px;height:416px;background:#000;"></div>
<div class="a" style="left:308px;top:253px;width:1px;height:416px;background:#000;"></div>
<div class="a" style="left:413px;top:253px;width:1px;height:416px;background:#000;"></div>
<span class="a t" id="t59" style="left:67.80px;top:258.66px;font-size:16px;line-height:16px;color:#000;font-weight:400;font-family:'Liberation Sans', sans-serif;letter-spacing:0.264px;">Сентябрь</span>
<span class="a t" id="t60" style="left:285.83px;top:258.88px;font-size:16.8px;line-height:16.8px;color:#000;font-weight:400;font-family:'Liberation Sans', sans-serif;letter-spacing:0.500px;">28</span>
<span class="a t" id="t61" style="left:390.33px;top:258.88px;font-size:16.8px;line-height:16.8px;color:#000;font-weight:400;font-family:'Liberation Sans', sans-serif;letter-spacing:0.500px;">54</span>
<span class="a t" id="t62" style="left:67.80px;top:284.66px;font-size:16px;line-height:16px;color:#000;font-weight:400;font-family:'Liberation Sans', sans-serif;letter-spacing:0.726px;">Октябрь</span>
<span class="a t" id="t63" style="left:285.83px;top:284.88px;font-size:16.8px;line-height:16.8px;color:#000;font-weight:400;font-family:'Liberation Sans', sans-serif;letter-spacing:0.500px;">31</span>
<span class="a t" id="t64" style="left:390.33px;top:284.88px;font-size:16.8px;line-height:16.8px;color:#000;font-weight:400;font-family:'Liberation Sans', sans-serif;letter-spacing:0.500px;">63</span>
<span class="a t" id="t65" style="left:67.80px;top:310.66px;font-size:16px;line-height:16px;color:#000;font-weight:400;font-family:'Liberation Sans', sans-serif;letter-spacing:0.781px;">Ноябрь</span>
<span class="a t" id="t66" style="left:285.83px;top:310.88px;font-size:16.8px;line-height:16.8px;color:#000;font-weight:400;font-family:'Liberation Sans', sans-serif;letter-spacing:0.500px;">78</span>
<span class="a t" id="t67" style="left:390.33px;top:310.88px;font-size:16.8px;line-height:16.8px;color:#000;font-weight:400;font-family:'Liberation Sans', sans-serif;letter-spacing:0.500px;">43</span>
<span class="a t" id="t68" style="left:67.80px;top:336.66px;font-size:16px;line-height:16px;color:#000;font-weight:400;font-family:'Liberation Sans', sans-serif;letter-spacing:0.916px;">Декабрь</span>
<span class="a t" id="t69" style="left:276.00px;top:336.88px;font-size:16.8px;line-height:16.8px;color:#000;font-weight:400;font-family:'Liberation Sans', sans-serif;letter-spacing:0.500px;">134</span>
<span class="a t" id="t70" style="left:390.33px;top:336.88px;font-size:16.8px;line-height:16.8px;color:#000;font-weight:400;font-family:'Liberation Sans', sans-serif;letter-spacing:0.500px;">43</span>
<span class="a t" id="t71" style="left:67.80px;top:362.66px;font-size:16px;line-height:16px;color:#000;font-weight:400;font-family:'Liberation Sans', sans-serif;letter-spacing:0.593px;">Январь</span>
<span class="a t" id="t72" style="left:285.83px;top:362.88px;font-size:16.8px;line-height:16.8px;color:#000;font-weight:400;font-family:'Liberation Sans', sans-serif;letter-spacing:0.500px;">53</span>
<span class="a t" id="t73" style="left:390.33px;top:362.88px;font-size:16.8px;line-height:16.8px;color:#000;font-weight:400;font-family:'Liberation Sans', sans-serif;letter-spacing:0.500px;">56</span>
<span class="a t" id="t74" style="left:67.80px;top:388.66px;font-size:16px;line-height:16px;color:#000;font-weight:400;font-family:'Liberation Sans', sans-serif;letter-spacing:0.596px;">Февраль</span>
<span class="a t" id="t75" style="left:285.83px;top:388.88px;font-size:16.8px;line-height:16.8px;color:#000;font-weight:400;font-family:'Liberation Sans', sans-serif;letter-spacing:0.500px;">54</span>
<span class="a t" id="t76" style="left:390.33px;top:388.88px;font-size:16.8px;line-height:16.8px;color:#000;font-weight:400;font-family:'Liberation Sans', sans-serif;letter-spacing:0.500px;">64</span>
<span class="a t" id="t77" style="left:67.80px;top:414.66px;font-size:16px;line-height:16px;color:#000;font-weight:400;font-family:'Liberation Sans', sans-serif;letter-spacing:1.155px;">Март</span>
<span class="a t" id="t78" style="left:276.00px;top:414.88px;font-size:16.8px;line-height:16.8px;color:#000;font-weight:400;font-family:'Liberation Sans', sans-serif;letter-spacing:0.500px;">345</span>
<span class="a t" id="t79" style="left:390.33px;top:414.88px;font-size:16.8px;line-height:16.8px;color:#000;font-weight:400;font-family:'Liberation Sans', sans-serif;letter-spacing:0.500px;">56</span>
<span class="a t" id="t80" style="left:67.80px;top:440.66px;font-size:16px;line-height:16px;color:#000;font-weight:400;font-family:'Liberation Sans', sans-serif;letter-spacing:0.803px;">Апрель</span>
<span class="a t" id="t81" style="left:285.83px;top:440.88px;font-size:16.8px;line-height:16.8px;color:#000;font-weight:400;font-family:'Liberation Sans', sans-serif;letter-spacing:0.500px;">34</span>
<span class="a t" id="t82" style="left:390.33px;top:440.88px;font-size:16.8px;line-height:16.8px;color:#000;font-weight:400;font-family:'Liberation Sans', sans-serif;letter-spacing:0.500px;">64</span>
<span class="a t" id="t83" style="left:67.80px;top:466.66px;font-size:16px;line-height:16px;color:#000;font-weight:400;font-family:'Liberation Sans', sans-serif;letter-spacing:1.119px;">Май</span>
<span class="a t" id="t84" style="left:285.83px;top:466.88px;font-size:16.8px;line-height:16.8px;color:#000;font-weight:400;font-family:'Liberation Sans', sans-serif;letter-spacing:0.500px;">43</span>
<span class="a t" id="t85" style="left:390.33px;top:466.88px;font-size:16.8px;line-height:16.8px;color:#000;font-weight:400;font-family:'Liberation Sans', sans-serif;letter-spacing:0.500px;">36</span>
<span class="a t" id="t86" style="left:67.80px;top:492.66px;font-size:16px;line-height:16px;color:#000;font-weight:400;font-family:'Liberation Sans', sans-serif;letter-spacing:1.157px;">Июнь</span>
<span class="a t" id="t87" style="left:285.83px;top:492.88px;font-size:16.8px;line-height:16.8px;color:#000;font-weight:400;font-family:'Liberation Sans', sans-serif;letter-spacing:0.500px;">22</span>
<span class="a t" id="t88" style="left:390.33px;top:492.88px;font-size:16.8px;line-height:16.8px;color:#000;font-weight:400;font-family:'Liberation Sans', sans-serif;letter-spacing:0.500px;">76</span>
<span class="a t" id="t89" style="left:67.80px;top:518.66px;font-size:16px;line-height:16px;color:#000;font-weight:400;font-family:'Liberation Sans', sans-serif;letter-spacing:1.118px;">Июль</span>
<span class="a t" id="t90" style="left:285.83px;top:518.88px;font-size:16.8px;line-height:16.8px;color:#000;font-weight:400;font-family:'Liberation Sans', sans-serif;letter-spacing:0.500px;">43</span>
<span class="a t" id="t91" style="left:390.33px;top:518.88px;font-size:16.8px;line-height:16.8px;color:#000;font-weight:400;font-family:'Liberation Sans', sans-serif;letter-spacing:0.500px;">56</span>
<span class="a t" id="t92" style="left:67.80px;top:544.66px;font-size:16px;line-height:16px;color:#000;font-weight:400;font-family:'Liberation Sans', sans-serif;letter-spacing:0.591px;">Август</span>
<span class="a t" id="t93" style="left:285.83px;top:544.88px;font-size:16.8px;line-height:16.8px;color:#000;font-weight:400;font-family:'Liberation Sans', sans-serif;letter-spacing:0.500px;">24</span>
<span class="a t" id="t94" style="left:390.33px;top:544.88px;font-size:16.8px;line-height:16.8px;color:#000;font-weight:400;font-family:'Liberation Sans', sans-serif;letter-spacing:0.500px;">65</span>
<span class="a t" id="t95" style="left:67.80px;top:570.66px;font-size:16px;line-height:16px;color:#000;font-weight:400;font-family:'Liberation Sans', sans-serif;letter-spacing:0.264px;">Сентябрь</span>
<span class="a t" id="t96" style="left:285.83px;top:570.88px;font-size:16.8px;line-height:16.8px;color:#000;font-weight:400;font-family:'Liberation Sans', sans-serif;letter-spacing:0.500px;">53</span>
<span class="a t" id="t97" style="left:390.33px;top:570.88px;font-size:16.8px;line-height:16.8px;color:#000;font-weight:400;font-family:'Liberation Sans', sans-serif;letter-spacing:0.500px;">76</span>
<span class="a t" id="t98" style="left:67.80px;top:596.66px;font-size:16px;line-height:16px;color:#000;font-weight:400;font-family:'Liberation Sans', sans-serif;letter-spacing:0.726px;">Октябрь</span>
<span class="a t" id="t99" style="left:285.83px;top:596.88px;font-size:16.8px;line-height:16.8px;color:#000;font-weight:400;font-family:'Liberation Sans', sans-serif;letter-spacing:0.500px;">31</span>
<span class="a t" id="t100" style="left:390.33px;top:596.88px;font-size:16.8px;line-height:16.8px;color:#000;font-weight:400;font-family:'Liberation Sans', sans-serif;letter-spacing:0.500px;">67</span>
<span class="a t" id="t101" style="left:67.80px;top:622.66px;font-size:16px;line-height:16px;color:#000;font-weight:400;font-family:'Liberation Sans', sans-serif;letter-spacing:0.781px;">Ноябрь</span>
<span class="a t" id="t102" style="left:285.83px;top:622.88px;font-size:16.8px;line-height:16.8px;color:#000;font-weight:400;font-family:'Liberation Sans', sans-serif;letter-spacing:0.500px;">78</span>
<span class="a t" id="t103" style="left:390.33px;top:622.88px;font-size:16.8px;line-height:16.8px;color:#000;font-weight:400;font-family:'Liberation Sans', sans-serif;letter-spacing:0.500px;">67</span>
<span class="a t" id="t104" style="left:67.80px;top:648.66px;font-size:16px;line-height:16px;color:#000;font-weight:400;font-family:'Liberation Sans', sans-serif;letter-spacing:0.916px;">Декабрь</span>
<span class="a t" id="t105" style="left:276.00px;top:648.88px;font-size:16.8px;line-height:16.8px;color:#000;font-weight:400;font-family:'Liberation Sans', sans-serif;letter-spacing:0.500px;">134</span>
<span class="a t" id="t106" style="left:390.33px;top:648.88px;font-size:16.8px;line-height:16.8px;color:#000;font-weight:400;font-family:'Liberation Sans', sans-serif;letter-spacing:0.500px;">76</span>
<div class="a" style="left:415px;top:253px;width:119px;height:299px;background:#fff;"></div>
<div class="a" style="left:415px;top:253px;width:1px;height:299px;background:#a6a6a6;"></div>
<div class="a" style="left:415px;top:552px;width:118px;height:1px;background:#a0a0a0;"></div>
<div class="a" style="left:533px;top:252px;width:1px;height:504px;background:#9a9a9a;"></div>
<div class="a" style="left:440px;top:253px;width:1.1999999999999886px;height:220px;background:#a6a6a6;"></div>
<div class="a" style="left:455.4px;top:253px;width:1.3000000000000114px;height:220px;background:#ababab;"></div>
<div class="a" style="left:440px;top:472.2px;width:17px;height:1.0px;background:#a6a6a6;"></div>
<div class="a" style="left:473.5px;top:253px;width:1.0px;height:215px;background:#d9d9d9;"></div>
<svg class="a" style="left:469px;top:467px;" width="5" height="5" viewBox="0 0 5 5"><path d="M0.5 4 L4.5 0.5" stroke="#d9d9d9" stroke-width="1"/></svg>
<svg class="a" style="left:0px;top:0px;overflow:hidden;" width="940" height="835" viewBox="0 0 940 835"><defs><clipPath id="cc"><rect x="415" y="253" width="119" height="299"/></clipPath></defs><g clip-path="url(#cc)"><rect x="471.3" y="458.70" width="70" height="4.5" fill="#ed7d31"/><rect x="471.3" y="458.70" width="70" height="0.9" fill="#c4642a"/><rect x="471.3" y="463.20" width="38.4" height="3.3" fill="#4472c4"/><rect x="471.3" y="465.60" width="38.4" height="0.9" fill="#2f4f8a"/><rect x="471.3" y="446.05" width="70" height="4.5" fill="#ed7d31"/><rect x="471.3" y="446.05" width="70" height="0.9" fill="#c4642a"/><rect x="471.3" y="450.55" width="46.5" height="3.3" fill="#4472c4"/><rect x="471.3" y="452.95" width="46.5" height="0.9" fill="#2f4f8a"/><rect x="471.3" y="433.40" width="70" height="4.5" fill="#ed7d31"/><rect x="471.3" y="433.40" width="70" height="0.9" fill="#c4642a"/><rect x="471.3" y="437.90" width="68.7" height="3.3" fill="#4472c4"/><rect x="471.3" y="440.30" width="68.7" height="0.9" fill="#2f4f8a"/><rect x="471.3" y="420.75" width="70" height="4.5" fill="#ed7d31"/><rect x="471.3" y="420.75" width="70" height="0.9" fill="#c4642a"/><rect x="471.3" y="425.25" width="68.7" height="3.3" fill="#4472c4"/><rect x="471.3" y="427.65" width="68.7" height="0.9" fill="#2f4f8a"/><rect x="471.3" y="408.10" width="70" height="4.5" fill="#ed7d31"/><rect x="471.3" y="408.10" width="70" height="0.9" fill="#c4642a"/><rect x="471.3" y="412.60" width="9.2" height="3.3" fill="#4472c4"/><rect x="471.3" y="415.00" width="9.2" height="0.9" fill="#2f4f8a"/><rect x="471.3" y="395.45" width="70" height="4.5" fill="#ed7d31"/><rect x="471.3" y="395.45" width="70" height="0.9" fill="#c4642a"/><rect x="471.3" y="399.95" width="41.1" height="3.3" fill="#4472c4"/><rect x="471.3" y="402.35" width="41.1" height="0.9" fill="#2f4f8a"/><rect x="471.3" y="382.80" width="70" height="4.5" fill="#ed7d31"/><rect x="471.3" y="382.80" width="70" height="0.9" fill="#c4642a"/><rect x="471.3" y="387.30" width="68.7" height="3.3" fill="#4472c4"/><rect x="471.3" y="389.70" width="68.7" height="0.9" fill="#2f4f8a"/><rect x="471.3" y="370.15" width="70" height="4.5" fill="#ed7d31"/><rect x="471.3" y="370.15" width="70" height="0.9" fill="#c4642a"/><rect x="471.3" y="374.65" width="68.7" height="3.3" fill="#4472c4"/><rect x="471.3" y="377.05" width="68.7" height="0.9" fill="#2f4f8a"/><rect x="471.3" y="357.50" width="70" height="4.5" fill="#ed7d31"/><rect x="471.3" y="357.50" width="70" height="0.9" fill="#c4642a"/><rect x="471.3" y="362.00" width="68.7" height="3.3" fill="#4472c4"/><rect x="471.3" y="364.40" width="68.7" height="0.9" fill="#2f4f8a"/><rect x="471.3" y="344.85" width="70" height="4.5" fill="#ed7d31"/><rect x="471.3" y="344.85" width="70" height="0.9" fill="#c4642a"/><rect x="471.3" y="349.35" width="68.7" height="3.3" fill="#4472c4"/><rect x="471.3" y="351.75" width="68.7" height="0.9" fill="#2f4f8a"/><rect x="471.3" y="332.20" width="70" height="4.5" fill="#ed7d31"/><rect x="471.3" y="332.20" width="70" height="0.9" fill="#c4642a"/><rect x="471.3" y="336.70" width="68.7" height="3.3" fill="#4472c4"/><rect x="471.3" y="339.10" width="68.7" height="0.9" fill="#2f4f8a"/><rect x="471.3" y="319.55" width="70" height="4.5" fill="#ed7d31"/><rect x="471.3" y="319.55" width="70" height="0.9" fill="#c4642a"/><rect x="471.3" y="324.05" width="68.7" height="3.3" fill="#4472c4"/><rect x="471.3" y="326.45" width="68.7" height="0.9" fill="#2f4f8a"/><rect x="471.3" y="306.90" width="70" height="4.5" fill="#ed7d31"/><rect x="471.3" y="306.90" width="70" height="0.9" fill="#c4642a"/><rect x="471.3" y="311.40" width="68.7" height="3.3" fill="#4472c4"/><rect x="471.3" y="313.80" width="68.7" height="0.9" fill="#2f4f8a"/><rect x="471.3" y="294.25" width="70" height="4.5" fill="#ed7d31"/><rect x="471.3" y="294.25" width="70" height="0.9" fill="#c4642a"/><rect x="471.3" y="298.75" width="68.7" height="3.3" fill="#4472c4"/><rect x="471.3" y="301.15" width="68.7" height="0.9" fill="#2f4f8a"/><rect x="471.3" y="281.60" width="70" height="4.5" fill="#ed7d31"/><rect x="471.3" y="281.60" width="70" height="0.9" fill="#c4642a"/><rect x="471.3" y="286.10" width="68.7" height="3.3" fill="#4472c4"/><rect x="471.3" y="288.50" width="68.7" height="0.9" fill="#2f4f8a"/><rect x="471.3" y="268.95" width="70" height="4.5" fill="#ed7d31"/><rect x="471.3" y="268.95" width="70" height="0.9" fill="#c4642a"/><rect x="471.3" y="273.45" width="68.7" height="3.3" fill="#4472c4"/><rect x="471.3" y="275.85" width="68.7" height="0.9" fill="#2f4f8a"/><rect x="471.3" y="256.30" width="70" height="4.5" fill="#ed7d31"/><rect x="471.3" y="256.30" width="70" height="0.9" fill="#c4642a"/><rect x="471.3" y="260.80" width="68.7" height="3.3" fill="#4472c4"/><rect x="471.3" y="263.20" width="68.7" height="0.9" fill="#2f4f8a"/></g></svg>
<span class="a t" id="t107" style="left:448.05px;top:457.56px;font-size:13.4px;line-height:13.4px;color:#595959;font-weight:400;font-family:'Liberation Sans', sans-serif;">1</span>
<span class="a t" id="t108" style="left:448.05px;top:432.26px;font-size:13.4px;line-height:13.4px;color:#595959;font-weight:400;font-family:'Liberation Sans', sans-serif;">3</span>
<span class="a t" id="t109" style="left:448.05px;top:406.96px;font-size:13.4px;line-height:13.4px;color:#595959;font-weight:400;font-family:'Liberation Sans', sans-serif;">5</span>
<span class="a t" id="t110" style="left:448.05px;top:381.66px;font-size:13.4px;line-height:13.4px;color:#595959;font-weight:400;font-family:'Liberation Sans', sans-serif;">7</span>
<span class="a t" id="t111" style="left:448.05px;top:356.36px;font-size:13.4px;line-height:13.4px;color:#595959;font-weight:400;font-family:'Liberation Sans', sans-serif;">9</span>
<span class="a t" id="t112" style="left:441.59px;top:331.06px;font-size:13.4px;line-height:13.4px;color:#595959;font-weight:400;font-family:'Liberation Sans', sans-serif;">11</span>
<span class="a t" id="t113" style="left:440.59px;top:305.76px;font-size:13.4px;line-height:13.4px;color:#595959;font-weight:400;font-family:'Liberation Sans', sans-serif;">13</span>
<span class="a t" id="t114" style="left:440.59px;top:280.46px;font-size:13.4px;line-height:13.4px;color:#595959;font-weight:400;font-family:'Liberation Sans', sans-serif;">15</span>
<span class="a t" id="t115" style="left:440.59px;top:255.16px;font-size:13.4px;line-height:13.4px;color:#595959;font-weight:400;font-family:'Liberation Sans', sans-serif;">17</span>
<span class="a t" id="t116" style="left:467.07px;top:483.26px;font-size:13.4px;line-height:13.4px;color:#595959;font-weight:400;font-family:'Liberation Sans', sans-serif;">0</span>
<svg class="a" style="left:436px;top:468px;" width="24" height="9" viewBox="0 0 24 9"><circle cx="4.2" cy="4.5" r="2.2" fill="#fff" stroke="#3c8ee0" stroke-width="1.1"/><circle cx="19.9" cy="4.5" r="2.2" fill="#fff" stroke="#3c8ee0" stroke-width="1.1"/></svg>
<svg class="a" style="left:409px;top:316px;" width="13" height="13" viewBox="0 0 13 13"><circle cx="6.5" cy="7.2" r="4.4" fill="#fff" stroke="#8f8f8f" stroke-width="1.9"/></svg>
<svg class="a" style="left:409px;top:545px;" width="13" height="13" viewBox="0 0 13 13"><circle cx="6.5" cy="7.4" r="4.4" fill="#fff" stroke="#8f8f8f" stroke-width="1.9"/></svg>
<div class="a" style="left:534px;top:228px;width:22px;height:528px;background:#e6e6e6;"></div>
<div class="a" style="left:537px;top:230px;width:15px;height:15px;background:#fff;box-sizing:border-box;border:1px solid #b4b4b4;"></div>
<svg class="a" style="left:540.5px;top:234.5px;" width="8" height="5" viewBox="0 0 8 5"><path d="M0 4.5 H7 L3.5 0.5 Z" fill="#5f5f5f"/></svg>
<div class="a" style="left:537px;top:245px;width:15px;height:159.5px;background:#dadada;"></div>
<div class="a" style="left:537px;top:405px;width:15px;height:336px;background:#fff;box-sizing:border-box;border:1px solid #b4b4b4;"></div>
<div class="a" style="left:537px;top:741px;width:15px;height:15px;background:#fff;box-sizing:border-box;border:1px solid #b4b4b4;"></div>
<svg class="a" style="left:540.5px;top:745.5px;" width="8" height="5" viewBox="0 0 8 5"><path d="M0 0.5 H7 L3.5 4.5 Z" fill="#5f5f5f"/></svg>
<div class="a" style="left:555px;top:230px;width:1px;height:551px;background:#b4b4b4;"></div>
<div class="a" style="left:32px;top:755px;width:523px;height:28px;background:#e6e6e6;"></div>
<div class="a" style="left:32px;top:755px;width:96px;height:1px;background:#a6a6a6;"></div>
<div class="a" style="left:188px;top:755px;width:345px;height:1px;background:#a6a6a6;"></div>
<svg class="a" style="left:54px;top:764px;" width="6" height="9" viewBox="0 0 6 9"><path d="M5 0.5 L0.8 4.5 L5 8.5 Z" fill="#c0c0c0"/></svg>
<svg class="a" style="left:83.5px;top:764px;" width="6" height="9" viewBox="0 0 6 9"><path d="M0.8 0.5 L5 4.5 L0.8 8.5 Z" fill="#c0c0c0"/></svg>
<div class="a" style="left:128px;top:755px;width:60px;height:25.5px;background:#fff;"></div>
<div class="a" style="left:128px;top:755px;width:1px;height:25px;background:#a6a6a6;"></div>
<div class="a" style="left:187px;top:755px;width:1px;height:25px;background:#a6a6a6;"></div>
<div class="a" style="left:128px;top:778px;width:60px;height:2px;background:#217346;"></div>
<span class="a t" id="t117" style="left:140.00px;top:762.42px;font-size:12.5px;line-height:12.5px;color:#217346;font-weight:700;font-family:'Liberation Sans', sans-serif;letter-spacing:-0.257px;">Лист1</span>
<svg class="a" style="left:220.5px;top:760.5px;" width="17" height="17" viewBox="0 0 17 17"><circle cx="8.2" cy="8.3" r="7.3" fill="none" stroke="#6b6b6b" stroke-width="1.1"/><path d="M8.2 4.3 V12.3 M4.2 8.3 H12.2" stroke="#6b6b6b" stroke-width="1.3"/></svg>
<div class="a" style="left:344px;top:764px;width:2px;height:2px;background:#b0b0b0;"></div>
<div class="a" style="left:344px;top:768px;width:2px;height:2px;background:#b0b0b0;"></div>
<div class="a" style="left:344px;top:772px;width:2px;height:2px;background:#b0b0b0;"></div>
<div class="a" style="left:361.5px;top:762px;width:15.0px;height:15px;background:#fff;box-sizing:border-box;border:1px solid #c6c6c6;"></div>
<svg class="a" style="left:365.5px;top:765.5px;" width="6" height="8" viewBox="0 0 6 8"><path d="M5 0.5 L0.8 4 L5 7.5 Z" fill="#5f5f5f"/></svg>
<div class="a" style="left:376.5px;top:762px;width:41.5px;height:15px;background:#fff;box-sizing:border-box;border:1px solid #c6c6c6;"></div>
<div class="a" style="left:418px;top:762.5px;width:101.5px;height:14.0px;background:#dadada;"></div>
<div class="a" style="left:519px;top:762px;width:15px;height:15px;background:#fff;box-sizing:border-box;border:1px solid #c6c6c6;"></div>
<svg class="a" style="left:524px;top:765.5px;" width="6" height="8" viewBox="0 0 6 8"><path d="M0.8 0.5 L5 4 L0.8 7.5 Z" fill="#5f5f5f"/></svg>
<div class="a" style="left:32px;top:783px;width:876px;height:20px;background:#f3f3f3;"></div>
<div class="a" style="left:32px;top:783px;width:876px;height:1px;background:#d2d2d2;"></div>
<span class="a t" id="t118" style="left:36.50px;top:789.17px;font-size:11.5px;line-height:11.5px;color:#333;font-weight:400;font-family:'Liberation Sans', sans-serif;letter-spacing:0.247px;">Готово</span>
<span class="a t" id="t119" style="left:288.50px;top:788.77px;font-size:11.5px;line-height:11.5px;color:#333;font-weight:400;font-family:'Liberation Sans', sans-serif;letter-spacing:-0.327px;">Среднее: 59,25</span>
<span class="a t" id="t120" style="left:418.30px;top:788.77px;font-size:11.5px;line-height:11.5px;color:#333;font-weight:400;font-family:'Liberation Sans', sans-serif;letter-spacing:-0.104px;">Количество: 48</span>
<span class="a t" id="t121" style="left:514.20px;top:788.77px;font-size:11.5px;line-height:11.5px;color:#333;font-weight:400;font-family:'Liberation Sans', sans-serif;letter-spacing:-0.401px;">Сумма: 2844</span>
<div class="a" style="left:596px;top:784px;width:40px;height:19px;background:#c8c8c8;"></div>
<svg class="a" style="left:608px;top:786px;" width="16" height="15" viewBox="0 0 16 15"><path d="M1.5 1.5 H13.5 V13.5 H1.5 Z M5.5 1.5 V13.5 M9.5 1.5 V13.5 M1.5 5.5 H13.5 M1.5 9.5 H13.5" fill="none" stroke="#6a6a6a" stroke-width="1.2"/></svg>
<svg class="a" style="left:648.5px;top:786.5px;" width="16" height="14" viewBox="0 0 16 14"><rect x="0.7" y="0.7" width="13.9" height="12.5" fill="none" stroke="#6a6a6a" stroke-width="1.25"/><rect x="3.7" y="2.6" width="7.9" height="8.7" fill="none" stroke="#6a6a6a" stroke-width="1.1"/><path d="M5.5 4.6 H9.8 M5.5 6.9 H9.8 M5.5 9.2 H9.8" stroke="#6a6a6a" stroke-width="1"/></svg>
<svg class="a" style="left:688.5px;top:786.5px;" width="16" height="14" viewBox="0 0 16 14"><path d="M0.7 0.7 H14.6 V13.2 H0.7 Z M4.9 0.7 V7.6 M9.1 0.7 V7.6 M0.7 7.6 H9.1" fill="none" stroke="#6a6a6a" stroke-width="1.25"/></svg>
<div class="a" style="left:722.5px;top:793.2px;width:7.2000000000000455px;height:1.2000000000000455px;background:#555;"></div>
<div class="a" style="left:735.2px;top:793.6px;width:99.59999999999991px;height:1.0px;background:#a8a8a8;"></div>
<div class="a" style="left:785.5px;top:790.5px;width:1.0px;height:7.0px;background:#a8a8a8;"></div>
<div class="a" style="left:788px;top:789px;width:5.2999999999999545px;height:11px;background:#6a6a6a;"></div>
<div class="a" style="left:840.3px;top:793.2px;width:7.5px;height:1.2000000000000455px;background:#555;"></div>
<div class="a" style="left:843.5px;top:789.5px;width:1.2000000000000455px;height:7.5px;background:#555;"></div>
<span class="a t" id="t122" style="left:861.50px;top:789.27px;font-size:11.5px;line-height:11.5px;color:#333;font-weight:400;font-family:'Liberation Sans', sans-serif;letter-spacing:-0.562px;">130 %</span>
<span class="a t" id="t123" style="left:569.40px;top:244.89px;font-size:19.5px;line-height:19.5px;color:#2a7a50;font-weight:400;font-family:'Liberation Sans', sans-serif;letter-spacing:0.481px;">Формат оси</span>
<svg class="a" style="left:839.5px;top:248.5px;" width="10.5" height="6" viewBox="0 0 10.5 6"><path d="M0 0 H10 L5 5.5 Z" fill="#6b6b6b"/></svg>
<svg class="a" style="left:880.5px;top:246.5px;" width="11" height="10" viewBox="0 0 11 10"><path d="M1 0.8 L10 9.2 M10 0.8 L1 9.2" stroke="#555" stroke-width="1.8"/></svg>
<span class="a t" id="t124" style="left:574.50px;top:280.74px;font-size:12px;line-height:12px;color:#3c3c3c;font-weight:700;font-family:'Liberation Sans', sans-serif;letter-spacing:-0.309px;">Параметры оси</span>
<svg class="a" style="left:670.5px;top:283px;" width="10.5" height="6.5" viewBox="0 0 10.5 6.5"><path d="M0 0 H10 L5 6 Z" fill="#7a7a7a"/></svg>
<div class="a" style="left:693.3px;top:278px;width:1.0px;height:18px;background:#d0d0d0;"></div>
<span class="a t" id="t125" style="left:698.90px;top:281.04px;font-size:12px;line-height:12px;color:#3c3c3c;font-weight:400;font-family:'Liberation Sans', sans-serif;letter-spacing:-0.179px;">Параметры текста</span>
<svg class="a" style="left:574px;top:307px;" width="26" height="25" viewBox="0 0 26 25"><path d="M12.5 3.9 C17.5 6 23.8 8 23 14.5 C22.6 17.5 21.3 19.5 20.4 21.3 L20 12.5 Z" fill="#6b6b6b"/><path d="M11.3 3.7 L20 12.5 L10.4 22.4 L1.4 13.4 Z" fill="#fff" stroke="#6b6b6b" stroke-width="1.2" stroke-linejoin="round"/><path d="M11.4 3.7 V9.4" stroke="#6b6b6b" stroke-width="1.2"/><circle cx="11.4" cy="9.6" r="1.35" fill="#6b6b6b"/><path d="M7.6 7.2 C7.2 1.2 12.2 0.8 11.9 4.6" fill="none" stroke="#6b6b6b" stroke-width="1.1"/></svg>
<svg class="a" style="left:615px;top:307px;" width="23" height="25" viewBox="0 0 23 25"><defs><linearGradient id="pg" x1="0" y1="0" x2="0" y2="1"><stop offset="0" stop-color="#d0d0d0"/><stop offset="1" stop-color="#e6e6e6"/></linearGradient></defs><path d="M5.8 20.2 L4.2 24.5 H18.8 L17 20.2 Z" fill="url(#pg)"/><path d="M11.4 1.1 L21.1 8.3 L17 20.2 H5.8 L1.9 8.3 Z" fill="#fff" stroke="#6b6b6b" stroke-width="1.2" stroke-linejoin="round"/><path d="M5.8 20.2 H17" stroke="#6b6b6b" stroke-width="1.6"/></svg>
<svg class="a" style="left:654px;top:307px;" width="24" height="25" viewBox="0 0 24 25"><path d="M7.6 2.3 V6.4 M21.7 2.3 V6.4 M7.6 4.6 H21.7" stroke="#6b6b6b" stroke-width="1.1" fill="none"/><path d="M1.3 8.6 H5.7 M3.5 8.6 V22.2 M1.3 22.2 H5.7" stroke="#6b6b6b" stroke-width="1.1" fill="none"/><rect x="7.4" y="8.3" width="14.5" height="14.4" rx="1.2" fill="#6f6f6f"/><path d="M14.6 11 V20 M10 15.5 H19.2" stroke="#fff" stroke-width="1"/><path d="M13.2 12.3 L14.6 10.8 L16 12.3 M13.2 18.7 L14.6 20.2 L16 18.7 M11.3 14.1 L9.8 15.5 L11.3 16.9 M17.9 14.1 L19.4 15.5 L17.9 16.9" stroke="#fff" stroke-width="1.1" fill="none"/></svg>
<div class="a" style="left:691px;top:305px;width:30px;height:30px;background:#b1b1b1;"></div>
<svg class="a" style="left:691px;top:305px;" width="30" height="30" viewBox="0 0 30 30"><rect x="5" y="9.7" width="6" height="15.3" fill="#217346"/><rect x="12.2" y="3.8" width="5.8" height="21.2" fill="#217346"/><rect x="19.3" y="6.9" width="5.7" height="18.1" fill="#217346"/></svg>
<svg class="a" style="left:569px;top:340px;" width="327" height="11" viewBox="0 0 327 11"><path d="M0 9.6 H130.8 L136.9 3.3 L143.6 9.6 H327" fill="none" stroke="#c6c6c6" stroke-width="1.1"/></svg>
<div class="a" style="left:879.5px;top:355.5px;width:15.5px;height:16.0px;background:#fff;box-sizing:border-box;border:1px solid #c6c6c6;"></div>
<svg class="a" style="left:883.5px;top:361px;" width="8" height="5" viewBox="0 0 8 5"><path d="M0 4.5 H7 L3.5 0.5 Z" fill="#5f5f5f"/></svg>
<div class="a" style="left:880px;top:371.5px;width:14.5px;height:55.0px;background:#dadada;"></div>
<div class="a" style="left:879.5px;top:426px;width:15.5px;height:323.5px;background:#fff;box-sizing:border-box;border:1px solid #c6c6c6;"></div>
<div class="a" style="left:879.5px;top:749px;width:15.5px;height:13.5px;background:#fff;box-sizing:border-box;border:1px solid #c6c6c6;"></div>
<svg class="a" style="left:883.5px;top:753.5px;" width="8" height="5" viewBox="0 0 8 5"><path d="M0 0.5 H7 L3.5 4.5 Z" fill="#5f5f5f"/></svg>
<svg class="a" style="left:601.2px;top:360.8px;" width="13" height="13" viewBox="0 0 13 13"><circle cx="6.5" cy="6.5" r="5.6" fill="#fff" stroke="#8a8a8a" stroke-width="1"/></svg>
<span class="a t" id="t126" style="left:619.60px;top:361.64px;font-size:12px;line-height:12px;color:#3c3c3c;font-weight:400;font-family:'Liberation Sans', sans-serif;letter-spacing:-0.338px;">Ось текста</span>
<div class="a" style="left:642px;top:373px;width:6px;height:1px;background:#555;"></div>
<svg class="a" style="left:601.2px;top:383.2px;" width="13" height="13" viewBox="0 0 13 13"><circle cx="6.5" cy="6.5" r="5.6" fill="#fff" stroke="#8a8a8a" stroke-width="1"/></svg>
<span class="a t" id="t127" style="left:619.60px;top:384.14px;font-size:12px;line-height:12px;color:#3c3c3c;font-weight:400;font-family:'Liberation Sans', sans-serif;letter-spacing:-0.518px;">Ось дат</span>
<div class="a" style="left:630px;top:395px;width:7px;height:1px;background:#555;"></div>
<span class="a t" id="t128" style="left:591.60px;top:408.14px;font-size:12px;line-height:12px;color:#3c3c3c;font-weight:400;font-family:'Liberation Sans', sans-serif;letter-spacing:-0.133px;">Горизонтальная ось пересекает</span>
<svg class="a" style="left:601.2px;top:436.0px;" width="13" height="13" viewBox="0 0 13 13"><circle cx="6.5" cy="6.5" r="5.6" fill="#fff" stroke="#8a8a8a" stroke-width="1"/><circle cx="6.5" cy="6.5" r="3" fill="#6a6a6a"/></svg>
<span class="a t" id="t129" style="left:619.60px;top:436.94px;font-size:12px;line-height:12px;color:#3c3c3c;font-weight:400;font-family:'Liberation Sans', sans-serif;letter-spacing:0.003px;">Автовыбор</span>
<div class="a" style="left:652px;top:448px;width:8px;height:1px;background:#555;"></div>
<svg class="a" style="left:601.2px;top:457.7px;" width="13" height="13" viewBox="0 0 13 13"><circle cx="6.5" cy="6.5" r="5.6" fill="#fff" stroke="#8a8a8a" stroke-width="1"/></svg>
<span class="a t" id="t130" style="left:619.60px;top:459.34px;font-size:12px;line-height:12px;color:#3c3c3c;font-weight:400;font-family:'Liberation Sans', sans-serif;letter-spacing:-0.025px;">в номере категории</span>
<div class="a" style="left:674px;top:471px;width:6px;height:1px;background:#555;"></div>
<div class="a" style="left:802.7px;top:455.6px;width:72.59999999999991px;height:18.599999999999966px;background:#efefef;"></div>
<span class="a t" id="t131" style="left:810.20px;top:459.14px;font-size:12px;line-height:12px;color:#a0a0a0;font-weight:400;font-family:'Liberation Sans', sans-serif;">1</span>
<svg class="a" style="left:601.2px;top:481.1px;" width="13" height="13" viewBox="0 0 13 13"><circle cx="6.5" cy="6.5" r="5.6" fill="#fff" stroke="#8a8a8a" stroke-width="1"/></svg>
<span class="a t" id="t132" style="left:619.60px;top:482.14px;font-size:12px;line-height:12px;color:#3c3c3c;font-weight:400;font-family:'Liberation Sans', sans-serif;letter-spacing:0.039px;">в максимальной категории</span>
<div class="a" style="left:629px;top:493px;width:7px;height:1px;background:#555;"></div>
<span class="a t" id="t133" style="left:591.60px;top:506.14px;font-size:12px;line-height:12px;color:#3c3c3c;font-weight:400;font-family:'Liberation Sans', sans-serif;letter-spacing:0.051px;">Положение оси</span>
<div class="a" style="left:591.6px;top:526.3px;width:12.399999999999977px;height:12.700000000000045px;background:#fff;box-sizing:border-box;border:1px solid #7a7a7a;"></div>
<span class="a t" id="t134" style="left:609.50px;top:527.34px;font-size:12px;line-height:12px;color:#3c3c3c;font-weight:400;font-family:'Liberation Sans', sans-serif;letter-spacing:0.043px;">Обратный порядок категорий</span>
<div class="a" style="left:660px;top:539px;width:6px;height:1px;background:#555;"></div>
<svg class="a" style="left:577.5px;top:563px;" width="6" height="10" viewBox="0 0 6 10"><path d="M0.7 0.7 L5 4.8 L0.7 8.9 Z" fill="none" stroke="#888" stroke-width="1"/></svg>
<span class="a t" id="t135" style="left:591.60px;top:562.14px;font-size:12px;line-height:12px;color:#444;font-weight:700;font-family:'Liberation Sans', sans-serif;letter-spacing:-0.120px;">Деления</span>
<svg class="a" style="left:576.5px;top:590px;" width="8" height="8" viewBox="0 0 8 8"><path d="M6.5 0.5 V6.5 H0.5 Z" fill="#444"/></svg>
<span class="a t" id="t136" style="left:591.60px;top:588.94px;font-size:12px;line-height:12px;color:#217346;font-weight:700;font-family:'Liberation Sans', sans-serif;letter-spacing:-0.156px;">Подписи</span>
<span class="a t" id="t137" style="left:591.60px;top:611.14px;font-size:12px;line-height:12px;color:#3c3c3c;font-weight:400;font-family:'Liberation Sans', sans-serif;letter-spacing:-0.052px;">Интервал между подписями</span>
<svg class="a" style="left:601.2px;top:639.2px;" width="13" height="13" viewBox="0 0 13 13"><circle cx="6.5" cy="6.5" r="5.6" fill="#fff" stroke="#8a8a8a" stroke-width="1"/><circle cx="6.5" cy="6.5" r="3" fill="#6a6a6a"/></svg>
<span class="a t" id="t138" style="left:619.60px;top:640.14px;font-size:12px;line-height:12px;color:#3c3c3c;font-weight:400;font-family:'Liberation Sans', sans-serif;letter-spacing:-0.039px;">Авто</span>
<div class="a" style="left:638px;top:651px;width:7px;height:1px;background:#555;"></div>
<svg class="a" style="left:601.2px;top:661.5px;" width="13" height="13" viewBox="0 0 13 13"><circle cx="6.5" cy="6.5" r="5.6" fill="#fff" stroke="#8a8a8a" stroke-width="1"/></svg>
<span class="a t" id="t139" style="left:619.60px;top:662.34px;font-size:12px;line-height:12px;color:#3c3c3c;font-weight:400;font-family:'Liberation Sans', sans-serif;letter-spacing:-0.222px;">Единица измерения интервала</span>
<div class="a" style="left:620px;top:674px;width:7px;height:1px;background:#555;"></div>
<div class="a" style="left:802.7px;top:659px;width:72.59999999999991px;height:17.600000000000023px;background:#efefef;"></div>
<span class="a t" id="t140" style="left:810.20px;top:662.14px;font-size:12px;line-height:12px;color:#a0a0a0;font-weight:400;font-family:'Liberation Sans', sans-serif;">1</span>
<span class="a t" id="t141" style="left:591.60px;top:688.74px;font-size:12px;line-height:12px;color:#3c3c3c;font-weight:400;font-family:'Liberation Sans', sans-serif;letter-spacing:-0.128px;">Расстояние от оси</span>
<div class="a" style="left:592px;top:700px;width:8px;height:1px;background:#555;"></div>
<div class="a" style="left:802.7px;top:684.8px;width:73.0px;height:18.600000000000023px;background:#fff;box-sizing:border-box;border:1px solid #c6c6c6;"></div>
<span class="a t" id="t142" style="left:808.70px;top:688.14px;font-size:12px;line-height:12px;color:#222;font-weight:400;font-family:'Liberation Sans', sans-serif;letter-spacing:-0.510px;">100</span>
<span class="a t" id="t143" style="left:591.20px;top:714.64px;font-size:12px;line-height:12px;color:#3c3c3c;font-weight:400;font-family:'Liberation Sans', sans-serif;letter-spacing:0.113px;">Положение подписи</span>
<div class="a" style="left:591px;top:726px;width:9px;height:1px;background:#555;"></div>
<div class="a" style="left:758px;top:710px;width:118px;height:21px;background:#fff;box-sizing:border-box;border:1px solid #b8b8b8;"></div>
<span class="a t" id="t144" style="left:764.00px;top:714.64px;font-size:12px;line-height:12px;color:#222;font-weight:400;font-family:'Liberation Sans', sans-serif;letter-spacing:0.044px;">внизу</span>
<svg class="a" style="left:863px;top:717.5px;" width="8" height="5" viewBox="0 0 8 5"><path d="M0 0 H7 L3.5 4 Z" fill="#5f5f5f"/></svg>
<div class="a" style="left:575.5px;top:702px;width:305.5px;height:36.5px;box-sizing:border-box;border:4.3px solid #fd0606;border-radius:13px;box-shadow:0 2px 4px rgba(0,0,0,0.35), inset 0 2px 4px rgba(0,0,0,0.3);"></div>
<svg class="a" style="left:577.5px;top:750.5px;" width="6" height="10" viewBox="0 0 6 10"><path d="M0.7 0.7 L5 4.8 L0.7 8.9 Z" fill="none" stroke="#888" stroke-width="1"/></svg>
<span class="a t" id="t145" style="left:591.80px;top:749.44px;font-size:12px;line-height:12px;color:#444;font-weight:700;font-family:'Liberation Sans', sans-serif;letter-spacing:-0.336px;">Число</span>
</body></html>
